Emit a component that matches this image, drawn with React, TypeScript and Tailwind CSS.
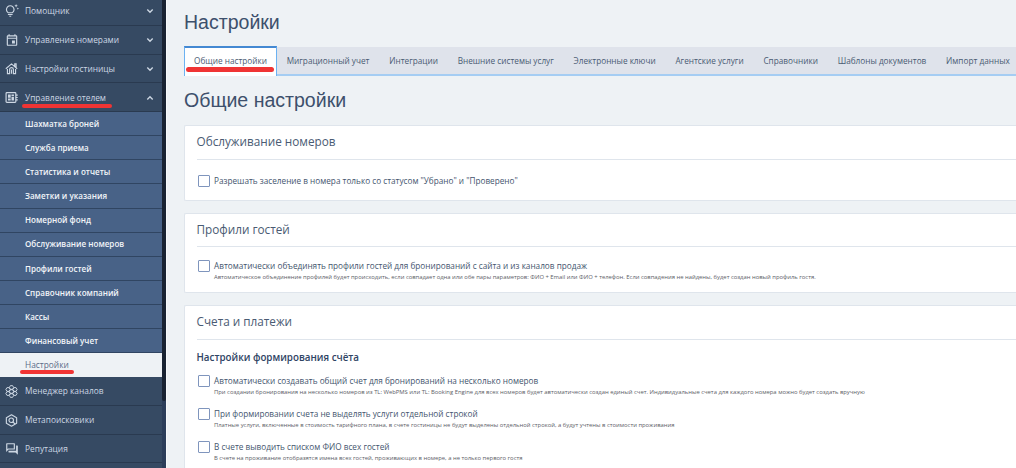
import type { ReactNode } from "react";
import { MdOutlineTipsAndUpdates, MdOutlineEvent, MdOutlineForum } from "react-icons/md";

const submenu = [
  "Шахматка броней", "Служба приема", "Статистика и отчеты", "Заметки и указания", "Номерной фонд",
  "Обслуживание номеров", "Профили гостей", "Справочник компаний", "Кассы", "Финансовый учет",
];

const tabs = [
  "Миграционный учет", "Интеграции", "Внешние системы услуг", "Электронные ключи", "Агентские услуги",
  "Справочники", "Шаблоны документов", "Импорт данных",
];

function HouseIcon() {
  return (
    <svg viewBox="0 0 24 24" className="size-[13px]" fill="none" stroke="currentColor" strokeWidth="2.1">
      <path d="M1.5 12.5 12 3.5l10.5 9M18 8V3.5h2.5V10M4.5 13v8.5h4V14c0-2 1.5-3.5 3.5-3.5s3.5 1.5 3.5 3.5v7.5h4V13M12 14v7.5" />
    </svg>
  );
}

function BoardIcon() {
  return (
    <svg viewBox="0 0 24 24" className="size-[13px]" fill="none" stroke="currentColor" strokeWidth="2.2">
      <rect x="2" y="3" width="18" height="18" rx="1.5" />
      <path d="M20 7.5h3.5M20 12h3.5M20 16.5h3.5" />
      <path d="M5.5 6.5h5v6h-5zM12 6.5h4.5v3H12zM5.5 14h5v3.5h-5zM12 11h4.5v6.5H12z" fill="currentColor" stroke="none" />
    </svg>
  );
}

function HexagonsIcon() {
  const centers = [[12, 12], [12, 4.6], [12, 19.4], [5.6, 8.3], [18.4, 8.3], [5.6, 15.7], [18.4, 15.7]];
  return (
    <svg viewBox="0 0 24 24" className="size-[13px]" fill="none" stroke="currentColor" strokeWidth="1.8">
      {centers.map(([x, y]) => (
        <path key={`${x}-${y}`} d={`M${x - 2} ${y - 3.4}h4l2 3.4-2 3.4h-4l-2-3.4z`} />
      ))}
    </svg>
  );
}

function MetaSearchIcon() {
  return (
    <svg viewBox="0 0 24 24" className="size-[13px]" fill="none" stroke="currentColor" strokeWidth="2.1">
      <path d="M12 1.5 21.5 6.7v10.6L12 22.5l-9.5-5.2V6.7z" strokeLinejoin="round" />
      <circle cx="11.5" cy="11.5" r="4.2" />
      <path d="m14.5 14.5 4 4" />
    </svg>
  );
}

function Chevron({ up = false }: { up?: boolean }) {
  return (
    <svg viewBox="0 0 8 6" className="h-[6px] w-[8px]" fill="none" stroke="currentColor" strokeWidth="1.4">
      <path d={up ? "M1.3 4.4 4 1.8l2.7 2.6" : "M1.3 1.6 4 4.2l2.7-2.6"} />
    </svg>
  );
}

function NavRow({ icon, label, chevron, marked }: { icon: ReactNode; label: string; chevron?: "up" | "down"; marked?: boolean }) {
  return (
    <div className="flex h-[28.8px] shrink-0 items-center border-b border-[#2a3a50] bg-[#364a63] pl-[5px] pr-[8px] pt-[1px] text-[#cdd7e3]">
      <span className="flex w-[20px] shrink-0 items-center">{icon}</span>
      <span className="relative text-[8.35px] font-medium">
        {label}
        {marked && <span className="absolute -left-[3px] top-[12px] h-[4px] w-[90px] rounded-full bg-[#f03434]" />}
      </span>
      {chevron && <span className="ml-auto"><Chevron up={chevron === "up"} /></span>}
    </div>
  );
}

function Card({ title, className, children }: { title: string; className: string; children: ReactNode }) {
  return (
    <section className={`shrink-0 rounded-l-[2px] border border-r-0 border-[#dfe5ec] bg-white pl-[11.5px] ${className}`}>
      <h3 className="flex h-[33.5px] items-center border-b border-[#dfe5ec] text-[11.75px] text-[#4a5b73]">{title}</h3>
      {children}
    </section>
  );
}

function Option({ label, hint, className }: { label: string; hint?: string; className: string }) {
  return (
    <div className={`flex gap-[4px] pl-[1.5px] ${className}`}>
      <span className="size-[12px] shrink-0 rounded-[1px] border-[1.5px] border-[#7f95bd] bg-white" />
      <div className="whitespace-nowrap">
        <div className="text-[8.21px] leading-[11px] text-[#44556e]">{label}</div>
        {hint && <div className="-mb-[1px] pt-[1px] text-[5.86px] leading-[11px] text-[#5c6067]">{hint}</div>}
      </div>
    </div>
  );
}

export default function App() {
  return (
    <div className="flex h-[468px] w-[1016px] overflow-hidden bg-[#eef2f5] font-['Open_Sans','Noto_Sans',sans-serif]">
      <aside className="flex w-[162px] shrink-0 flex-col overflow-hidden bg-[#364a63]">
        <div className="-mt-[3px] flex flex-col">
          <NavRow icon={<MdOutlineTipsAndUpdates className="size-[14px]" />} label="Помощник" chevron="down" />
          <NavRow icon={<MdOutlineEvent className="size-[14px]" />} label="Управление номерами" chevron="down" />
          <NavRow icon={<HouseIcon />} label="Настройки гостиницы" chevron="down" />
          <NavRow icon={<BoardIcon />} label="Управление отелем" chevron="up" marked />
        </div>
        <nav className="flex flex-col">
          {submenu.map((item) => (
            <div key={item} className="flex h-[24.08px] items-center border-b border-[#304562] bg-[#486287] pl-[25px] pt-[0.8px] text-[8.05px] font-semibold text-[#f2f5f9]">
              {item}
            </div>
          ))}
          <div className="flex h-[24px] items-center bg-[#eef2f5] pl-[25px] text-[8.35px] text-[#5b6c88]">
            <span className="relative">
              Настройки
              <span className="absolute -left-[5px] top-[11.5px] h-[4px] w-[54px] rounded-full bg-[#f03434]" />
            </span>
          </div>
        </nav>
        <NavRow icon={<HexagonsIcon />} label="Менеджер каналов" />
        <NavRow icon={<MetaSearchIcon />} label="Метапоисковики" />
        <NavRow icon={<MdOutlineForum className="size-[14px]" />} label="Репутация" />
      </aside>
      <div className="w-[4px] shrink-0 bg-[#2c3e5a]">
        <div className="h-[401px] rounded-b-[2px] bg-[#192332]" />
      </div>
      <main className="flex min-w-0 flex-1 flex-col border-l border-[#f8fafb] pl-[17px]">
        <h1 className="flex h-[46px] shrink-0 items-center font-['Liberation_Sans',sans-serif] text-[19.55px] text-[#3d506c]">Настройки</h1>
        <div className="flex h-[29.5px] shrink-0 whitespace-nowrap text-[8.22px] text-[#4a5b73]">
          <div className="relative flex w-[93px] shrink-0 items-center justify-center border-x border-t-2 border-x-[#6cb2f2] border-t-[#4489d2] bg-white pb-[1px]">
            Общие настройки
            <span className="absolute left-[1px] top-[19px] h-[4.5px] w-[88px] rounded-full bg-[#f03434]" />
          </div>
          <div className="mt-[1px] flex flex-1 items-center gap-[19.8px] border-b-2 border-[#a5cdf3] bg-[#dfe3eb] pl-[9.7px] pt-[1.5px]">
            {tabs.map((tab) => <span key={tab}>{tab}</span>)}
          </div>
        </div>
        <h2 className="flex h-[49.5px] shrink-0 items-center pt-[1px] font-['Liberation_Sans',sans-serif] text-[19.55px] text-[#3d506c]">Общие настройки</h2>
        <Card title="Обслуживание номеров" className="mb-[12px] h-[75.5px]">
          <Option label={'Разрешать заселение в номера только со статусом "Убрано" и "Проверено"'} className="pt-[15px]" />
        </Card>
        <Card title="Профили гостей" className="mb-[12px] h-[80.5px]">
          <Option
            label="Автоматически объединять профили гостей для бронирований с сайта и из каналов продаж"
            hint="Автоматическое объединение профилей будет происходить, если совпадает одна или обе пары параметров: ФИО + Email или ФИО + телефон. Если совпадения не найдены, будет создан новый профиль гостя."
            className="pt-[12.8px]"
          />
        </Card>
        <Card title="Счета и платежи" className="h-[180px]">
          <h4 className="pt-[11.5px] text-[9.8px] leading-[14px] font-semibold text-[#2f4464]">Настройки формирования счёта</h4>
          <Option
            label="Автоматически создавать общий счет для бронирований на несколько номеров"
            hint="При создании бронирования на несколько номеров из TL: WebPMS или TL: Booking Engine для всех номеров будет автоматически создан единый счет. Индивидуальные счета для каждого номера можно будет создать вручную"
            className="pt-[10.3px]"
          />
          <Option
            label="При формировании счета не выделять услуги отдельной строкой"
            hint="Платные услуги, включенные в стоимость тарифного плана, в счете гостиницы не будут выделены отдельной строкой, а будут учтены в стоимости проживания"
            className="pt-[10.8px]"
          />
          <Option
            label="В счете выводить списком ФИО всех гостей"
            hint="В счете на проживание отобразятся имена всех гостей, проживающих в номере, а не только первого гостя"
            className="pt-[10.7px]"
          />
        </Card>
      </main>
    </div>
  );
}
